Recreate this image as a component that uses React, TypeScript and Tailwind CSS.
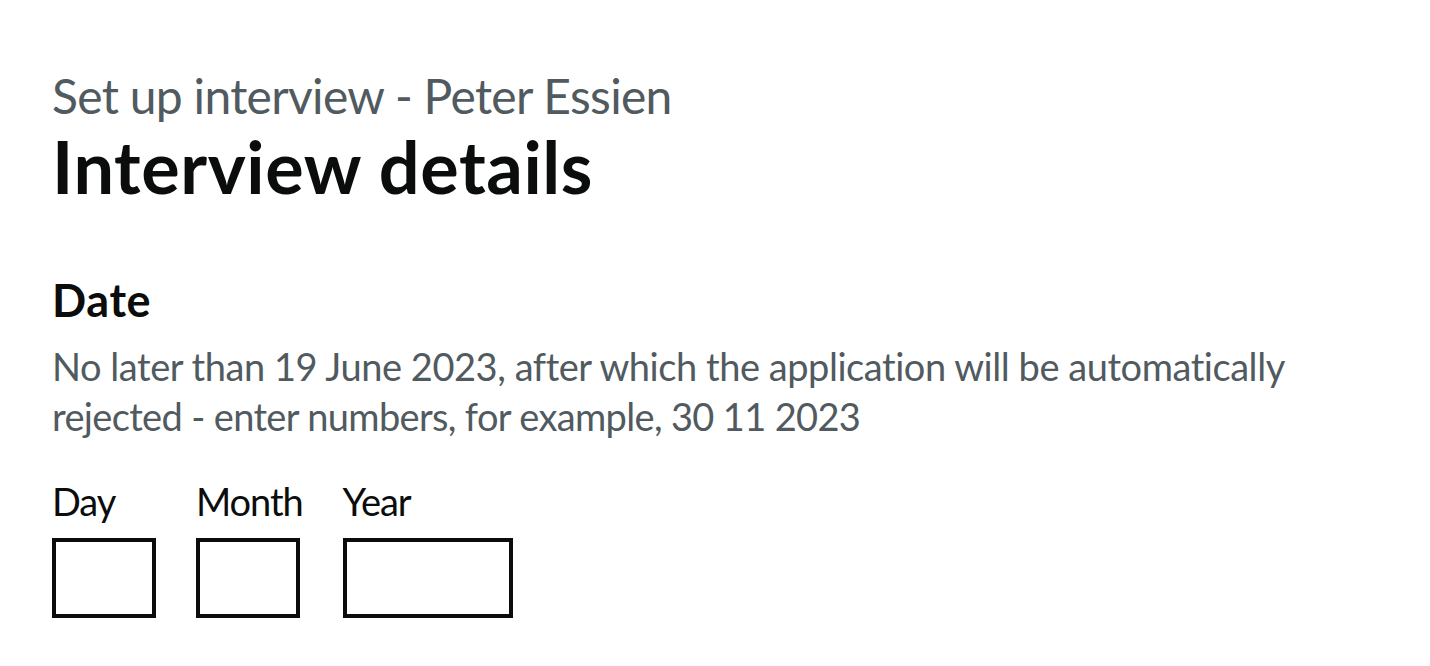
export default function App() {
  return (
    <div className="min-h-screen bg-white text-[#0b0c0c] font-['Lato',sans-serif]">
      <main className="px-[52px] pt-[66px]">
        <span className="block text-[48px] leading-[60px] tracking-[-0.7px] text-[#505a5f]">
          Set up interview - Peter Essien
        </span>
        <h1 className="text-[72px] leading-[80px] font-bold tracking-[0.6px]">Interview details</h1>

        <fieldset className="mt-[68px]">
          <legend className="text-[45px] leading-[52px] font-bold tracking-[0.6px]">Date</legend>
          <div className="mt-[15px] text-[38px] leading-[50px] tracking-[-0.45px] text-[#505a5f]">
            No later than 19 June 2023, after which the application will be automatically
            <br />
            <span className="tracking-[-0.65px]">rejected - enter numbers, for example, 30 11 2023</span>
          </div>

          <div className="mt-[35px] flex gap-[40px]">
            <DateField label="Day" width="w-[104px]" />
            <DateField label="Month" width="w-[104px]" />
            <DateField label="Year" width="w-[170px]" />
          </div>
        </fieldset>
      </main>
    </div>
  );
}

function DateField({ label, width }: { label: string; width: string }) {
  return (
    <div className="flex flex-col">
      <label className="text-[38px] leading-[50px] tracking-[-1.1px]">{label}</label>
      <input className={`${width} mt-[12px] h-[80px] border-[4px] border-[#0b0c0c] bg-white outline-none`} />
    </div>
  );
}
